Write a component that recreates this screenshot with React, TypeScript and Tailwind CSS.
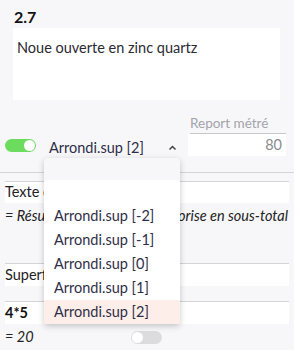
import React from "react";

const font = { fontFamily: "Lato, 'Noto Sans', sans-serif" };

function Toggle({ on }: { on: boolean }) {
  return (
    <div
      className={`w-[31px] h-[13px] rounded-full flex items-center px-[1px] ${
        on ? "bg-[#6cdc5e] justify-end" : "bg-[#dcdcdf] justify-start"
      }`}
    >
      <div className="w-[11px] h-[11px] rounded-full bg-white" />
    </div>
  );
}

export default function App() {
  const items = ["Arrondi.sup [-2]", "Arrondi.sup [-1]", "Arrondi.sup [0]", "Arrondi.sup [1]", "Arrondi.sup [2]"];
  return (
    <div
      className="relative w-[294px] h-[350px] overflow-hidden bg-[#f7f7f9] text-[#222]"
      style={font}
    >
      <div className="pl-[14px] pt-[6px] text-[16px] leading-[22px] font-bold text-[#111]">2.7</div>
      <div className="mx-[13px] w-[267px] h-[72px] bg-white px-[4px] pt-[10px] text-[14.5px] leading-[20px] text-[#2a2a33]">
        Noue ouverte en zinc quartz
      </div>

      <div className="mt-[12px] h-[61px] border-b border-[#d4d4d8] flex">
        <div className="w-[36px] shrink-0 pl-[5px] pt-[27px]">
          <Toggle on />
        </div>
        <div className="w-[132px] shrink-0 pl-[13px] pt-[26px] text-[14.5px] leading-[20px] text-[#2e2e48]">
          Arrondi.sup [2]
        </div>
        <div className="w-[9px] shrink-0 pt-[33px]">
          <svg width="9" height="6" viewBox="0 0 9 6">
            <path d="M1.5 4.5 L4.5 1.5 L7.5 4.5" fill="none" stroke="#444" strokeWidth="1.5" />
          </svg>
        </div>
        <div className="ml-[11px] w-[98px] shrink-0">
          <div className="ml-[2px] pt-[2px] h-[22px] border-b border-[#c8c8cc] text-[13.5px] leading-[19px] text-[#a3a3aa]">
            Report métré
          </div>
          <div className="h-[22px] bg-white text-right pr-[4px] text-[14.5px] leading-[22px] text-[#8a8a8e]">
            80
          </div>
        </div>
      </div>

      <div className="mt-[8px] mx-[5px] border-t border-[#d4d4d8] h-[22px] bg-white text-[14.5px] leading-[20px] text-[#222]">
        Texte du sous-total
      </div>
      <div className="flex justify-between pl-[5px] pr-[6px] pt-[3px] text-[14.5px] leading-[20px] italic text-[#222]">
        <span>= Résultat</span>
        <span>non catégorise en sous-total</span>
      </div>

      <div className="mt-[37px] mx-[5px] border-t border-[#d4d4d8] h-[23px] bg-white text-[14.5px] leading-[22px] text-[#222]">
        Superficie
      </div>
      <div className="mt-[15px] mx-[5px] border-t border-[#d4d4d8] h-[23px] bg-white text-[14.5px] leading-[22px] font-bold text-[#111]">
        4*5
      </div>
      <div className="flex items-center pl-[5px] pt-[3px]">
        <div className="w-[126px] text-[14.5px] leading-[20px] italic text-[#222]">= 20</div>
        <Toggle on={false} />
      </div>

      <div className="absolute left-[44px] top-[158px] w-[136px] rounded-[4px] bg-[#f7f7f9] shadow-[0_2px_6px_rgba(0,0,0,0.22)] overflow-hidden">
        <div className="h-[22px]" />
        <div className="bg-white rounded-t-[4px]">
          <div className="h-[24px]" />
          {items.map((t, i) => (
            <div
              key={t}
              className={`h-[24px] pl-[10px] text-[14.5px] leading-[24px] text-[#2e2e48] ${
                i === items.length - 1 ? "bg-[#fdeeea]" : ""
              }`}
            >
              {t}
            </div>
          ))}
        </div>
      </div>
    </div>
  );
}
